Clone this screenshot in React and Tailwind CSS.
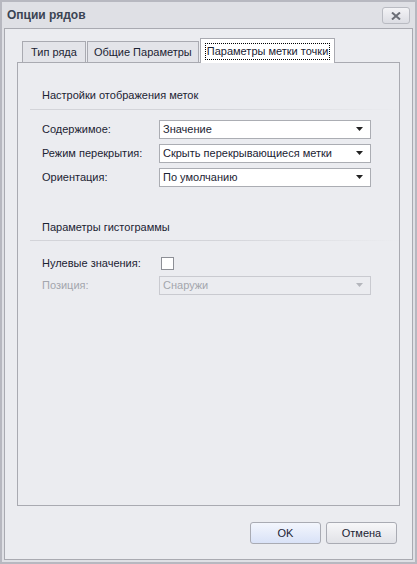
import React from "react";

function Combo({ value, disabled }) {
    return (
        <div className={`flex h-[19px] w-[212px] items-center justify-between border px-[3px] ${disabled ? "border-[#c9cad0] bg-[#ebecf0] text-[#a3a6ad]" : "border-[#abadb3] bg-white text-[#1b2333]"}`}>
            <span>{value}</span>
            <svg width="8" height="5" viewBox="0 0 8 5" className="mr-[3px]">
                <path d="M0 0h7L3.5 4z" fill={disabled ? "#b4b6bc" : "#222"} />
            </svg>
        </div>
    );
}

function Row({ label, children, disabled }) {
    return (
        <div className="flex items-center">
            <span className={`w-[117px] ${disabled ? "text-[#a3a6ad]" : ""}`}>{label}</span>
            {children}
        </div>
    );
}

function Section({ title }) {
    return (
        <div className="pl-[12px]">
            <div className="pl-[12px]">{title}</div>
            <div className="mt-[5px] h-px bg-gradient-to-r from-[#d3d4d9] via-[#d3d4d9] to-transparent" />
        </div>
    );
}

export default function App() {
    return (
        <div className="flex h-[564px] w-[417px] flex-col border-2 border-[#b7b8c0] bg-[#dfe0e5] text-[11px] text-[#1b2333]" style={{ fontFamily: "'Liberation Sans', Arial, sans-serif" }}>
            <div className="flex h-[26px] items-center justify-between px-[5px]">
                <span className="text-[12px] font-bold text-[#3b4454]">Опции рядов</span>
                <button className="mt-[1px] flex h-[17px] w-[28px] items-center justify-center rounded-[3px] border border-[#b9bbc2] bg-gradient-to-b from-[#f3f3f6] to-[#dcdde3]">
                    <svg width="10" height="8" viewBox="0 0 10 8">
                        <path d="M1 0.5l8 7M9 0.5l-8 7" stroke="#6b6e76" strokeWidth="2" />
                    </svg>
                </button>
            </div>
            <div className="mx-[2px] mb-[2px] flex flex-1 flex-col border border-[#a9aab1] bg-[#ebecf0] px-[12px] pt-[9px]">
                <div className="flex items-end pl-[5px]">
                    <div className="mr-px flex h-[21px] items-center border border-b-0 border-[#a9aab1] bg-[#e3e4e9] px-[8px]">Тип ряда</div>
                    <div className="mr-px flex h-[21px] items-center border border-b-0 border-[#a9aab1] bg-[#e3e4e9] px-[6px]">Общие Параметры</div>
                    <div className="relative z-10 -mb-px flex h-[25px] items-center border border-b-0 border-[#a9aab1] bg-white px-[4px]">
                        <span className="border border-dotted border-black px-[1px] leading-[15px]">Параметры метки точки</span>
                    </div>
                </div>
                <div className="flex h-[444px] flex-col border border-[#a9aab1] bg-[#ebecf0] pt-[24px]">
                    <Section title="Настройки отображения меток" />
                    <div className="mt-[10px] flex flex-col gap-[5px] pl-[24px]">
                        <Row label="Содержимое:"><Combo value="Значение" /></Row>
                        <Row label="Режим перекрытия:"><Combo value="Скрыть перекрывающиеся метки" /></Row>
                        <Row label="Ориентация:"><Combo value="По умолчанию" /></Row>
                    </div>
                    <div className="mt-[32px]">
                        <Section title="Параметры гистограммы" />
                    </div>
                    <div className="mt-[14px] flex flex-col gap-[4px] pl-[24px]">
                        <Row label="Нулевые значения:">
                            <div className="ml-[2px] h-[13px] w-[13px] border border-[#8d8f96] bg-white" />
                        </Row>
                        <Row label="Позиция:" disabled><Combo value="Снаружи" disabled /></Row>
                    </div>
                </div>
                <div className="mt-[16px] flex justify-end gap-[5px] pr-[3px]">
                    <button className="h-[22px] w-[71px] rounded-[3px] border border-[#a9abb3] bg-gradient-to-b from-[#f3f6fd] to-[#d9e2f7]">OK</button>
                    <button className="h-[22px] w-[71px] rounded-[3px] border border-[#a9abb3] bg-gradient-to-b from-[#f7f7f9] to-[#e1e2e7]">Отмена</button>
                </div>
            </div>
        </div>
    );
}
